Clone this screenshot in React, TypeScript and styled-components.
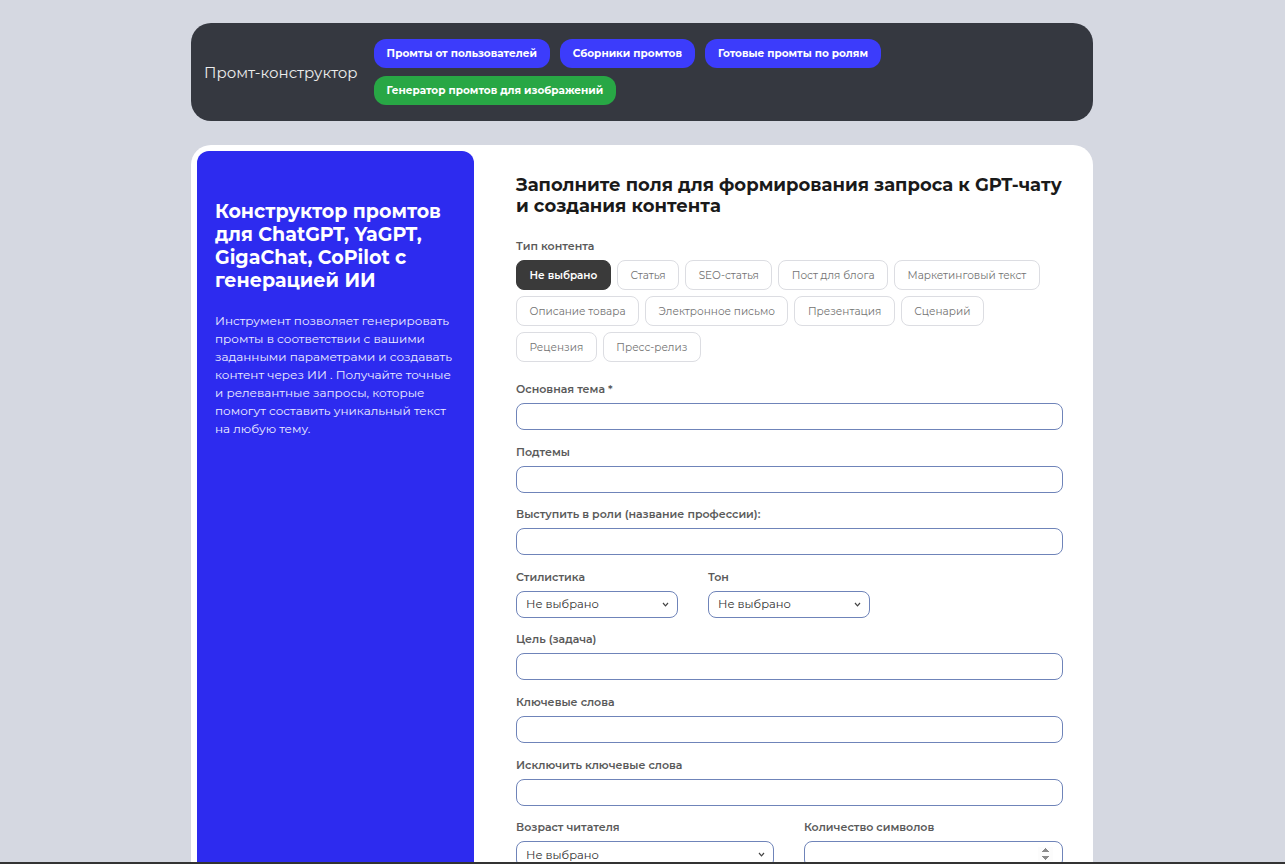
import React from "react";
import styled, { createGlobalStyle } from "styled-components";

const Global = createGlobalStyle`
  html, body { margin: 0; padding: 0; }
  body {
    background: #d5d8e1;
    font-family: "Montserrat", Inter, "Noto Sans", sans-serif;
    color: #222;
  }
  * { box-sizing: border-box; }
`;

const Page = styled.div`
  width: 902px;
  margin: 23px 192px 0 191px;
  display: flex;
  flex-direction: column;
  gap: 24px;
`;

const Header = styled.header`
  background: #353840;
  border-radius: 20px;
  min-height: 98px;
  display: flex;
  align-items: center;
  padding: 16px 13px;
  gap: 16px;
`;

const Brand = styled.div`
  color: #ececec;
  font-size: 15px;
  font-weight: 400;
  white-space: nowrap;
`;

const NavWrap = styled.nav`
  display: flex;
  flex-wrap: wrap;
  gap: 8px 10px;
  max-width: 520px;
`;

const NavButton = styled.a<{ $green?: boolean }>`
  display: inline-flex;
  align-items: center;
  height: 29px;
  padding: 0 13px;
  border-radius: 12px;
  background: ${(p) => (p.$green ? "#28a745" : "#3c3cfb")};
  color: #fff;
  font-size: 10.5px;
  font-weight: 700;
  white-space: nowrap;
  text-decoration: none;
`;

const Card = styled.main`
  background: #fff;
  border-radius: 20px;
  padding: 6px;
  display: grid;
  grid-template-columns: 277px 1fr;
  min-height: 900px;
`;

const Side = styled.aside`
  background: #2d2bef;
  border-radius: 12px;
  padding: 49px 18px 40px;
  color: #fff;
`;

const SideTitle = styled.h1`
  margin: 0 0 20px;
  font-size: 19px;
  line-height: 23px;
  font-weight: 700;
`;

const SideText = styled.p`
  margin: 0;
  font-size: 12px;
  line-height: 18px;
  color: #eef;
`;

const Form = styled.section`
  padding: 24px 24px 40px 42px;
  display: flex;
  flex-direction: column;
`;

const FormTitle = styled.h2`
  margin: 0 0 22px;
  font-size: 18px;
  line-height: 21px;
  font-weight: 700;
  color: #1a1a1a;
  max-width: 560px;
`;

const Label = styled.label`
  display: block;
  font-size: 11px;
  font-weight: 600;
  color: #5a5a5a;
  line-height: 14px;
  margin-bottom: 7px;
`;

const Chips = styled.div`
  display: flex;
  flex-wrap: wrap;
  gap: 6px;
  max-width: 547px;
  margin-bottom: 20px;
`;

const Chip = styled.button<{ $active?: boolean }>`
  height: 30px;
  padding: 0 12.5px;
  border-radius: 8px;
  border: 1px solid ${(p) => (p.$active ? "#3a3a3a" : "#dcdde2")};
  background: ${(p) => (p.$active ? "#3a3a3a" : "#fff")};
  color: ${(p) => (p.$active ? "#fff" : "#737373")};
  font-family: inherit;
  font-size: 10.5px;
  font-weight: ${(p) => (p.$active ? 600 : 400)};
  cursor: pointer;
`;

const Field = styled.div<{ $w?: string }>`
  width: ${(p) => p.$w || "547px"};
  margin-bottom: 14.6px;
`;

const Row = styled.div<{ $gap: number }>`
  display: flex;
  gap: ${(p) => p.$gap}px;
`;

const Input = styled.input`
  width: 100%;
  height: 27px;
  border: 1px solid #6f84b9;
  border-radius: 8px;
  padding: 0 9px;
  font-family: inherit;
  font-size: 12px;
  outline: none;
  &::-webkit-inner-spin-button { opacity: 1; }
`;

const SelectWrap = styled.div`
  position: relative;
`;

const Select = styled.select`
  width: 100%;
  height: 27px;
  border: 1px solid #6f84b9;
  border-radius: 8px;
  padding: 0 9px;
  font-family: inherit;
  font-size: 11.5px;
  color: #333;
  background: #fff;
  appearance: none;
  outline: none;
`;

const Chevron = styled.svg`
  position: absolute;
  right: 9px;
  top: 11px;
  width: 7px;
  height: 5px;
  pointer-events: none;
`;

const BottomLine = styled.div`
  position: fixed;
  left: 0;
  right: 0;
  bottom: 0;
  height: 2px;
  background: #333;
`;

const types = [
  "Не выбрано",
  "Статья",
  "SEO-статья",
  "Пост для блога",
  "Маркетинговый текст",
  "Описание товара",
  "Электронное письмо",
  "Презентация",
  "Сценарий",
  "Рецензия",
  "Пресс-релиз",
];

function Sel() {
  return (
    <SelectWrap>
      <Select defaultValue="0">
        <option value="0">Не выбрано</option>
      </Select>
      <Chevron viewBox="0 0 7 5">
        <path d="M1 1 L3.5 3.8 L6 1" fill="none" stroke="#444" strokeWidth="1.2" />
      </Chevron>
    </SelectWrap>
  );
}

export default function App() {
  return (
    <>
      <Global />
      <Page>
        <Header>
          <Brand>Промт-конструктор</Brand>
          <NavWrap>
            <NavButton>Промты от пользователей</NavButton>
            <NavButton>Сборники промтов</NavButton>
            <NavButton>Готовые промты по ролям</NavButton>
            <NavButton $green>Генератор промтов для изображений</NavButton>
          </NavWrap>
        </Header>
        <Card>
          <Side>
            <SideTitle>Конструктор промтов для ChatGPT, YaGPT, GigaChat, CoPilot с генерацией ИИ</SideTitle>
            <SideText>
              Инструмент позволяет генерировать промты в соответствии с вашими заданными параметрами и
              создавать контент через ИИ . Получайте точные и релевантные запросы, которые помогут
              составить уникальный текст на любую тему.
            </SideText>
          </Side>
          <Form>
            <FormTitle>Заполните поля для формирования запроса к GPT-чату и создания контента</FormTitle>
            <Label>Тип контента</Label>
            <Chips>
              {types.map((t, i) => (
                <Chip key={t} $active={i === 0}>
                  {t}
                </Chip>
              ))}
            </Chips>
            <Field>
              <Label>Основная тема *</Label>
              <Input />
            </Field>
            <Field>
              <Label>Подтемы</Label>
              <Input />
            </Field>
            <Field>
              <Label>Выступить в роли (название профессии):</Label>
              <Input />
            </Field>
            <Row $gap={30}>
              <Field $w="162px">
                <Label>Стилистика</Label>
                <Sel />
              </Field>
              <Field $w="162px">
                <Label>Тон</Label>
                <Sel />
              </Field>
            </Row>
            <Field>
              <Label>Цель (задача)</Label>
              <Input />
            </Field>
            <Field>
              <Label>Ключевые слова</Label>
              <Input />
            </Field>
            <Field>
              <Label>Исключить ключевые слова</Label>
              <Input />
            </Field>
            <Row $gap={30}>
              <Field $w="258px">
                <Label>Возраст читателя</Label>
                <Sel />
              </Field>
              <Field $w="259px">
                <Label>Количество символов</Label>
                <Input type="number" />
              </Field>
            </Row>
          </Form>
        </Card>
      </Page>
      <BottomLine />
    </>
  );
}
